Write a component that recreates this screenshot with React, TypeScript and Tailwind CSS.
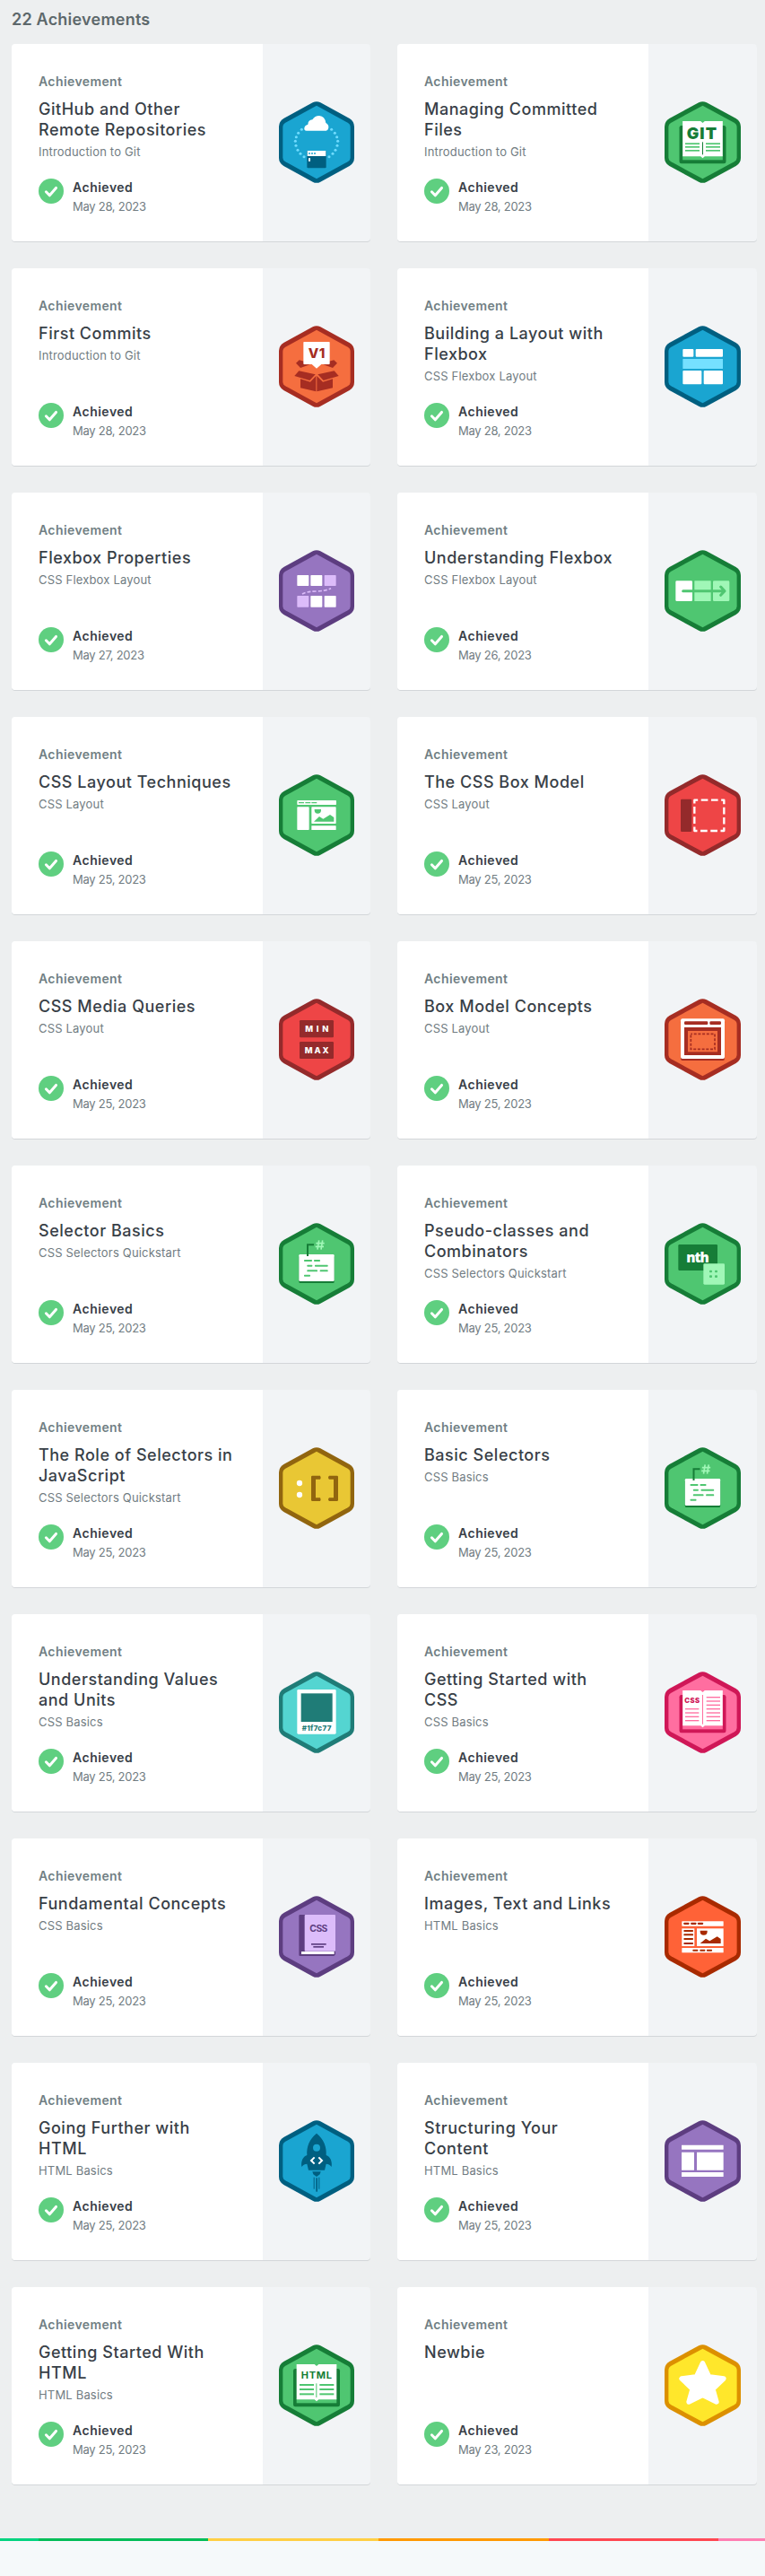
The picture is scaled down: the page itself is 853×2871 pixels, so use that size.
import type { ReactNode } from "react";

type Theme = { edge: string; fill: string };

const BLUE: Theme = { edge: "#005f80", fill: "#1aa5d1" };
const GREEN: Theme = { edge: "#167d37", fill: "#4fc671" };
const ORANGE: Theme = { edge: "#a62d22", fill: "#f56e3f" };
const PURPLE: Theme = { edge: "#5d3d80", fill: "#9675c0" };
const RED: Theme = { edge: "#942a2b", fill: "#ee4546" };
const YELLOW: Theme = { edge: "#91650f", fill: "#e9c734" };
const TEAL: Theme = { edge: "#1f7c77", fill: "#54d5d1" };
const PINK: Theme = { edge: "#cf1757", fill: "#ff6ea0" };
const FLAME: Theme = { edge: "#a82a00", fill: "#ff6237" };
const GOLD: Theme = { edge: "#dc9000", fill: "#ffe72b" };

function Badge({ theme, wide, children }: { theme: Theme; wide: boolean; children: ReactNode }) {
  const s = wide ? 255 / 252 : 1;
  return (
    <svg
      className={wide ? "h-[91px] w-[85px]" : "h-[91px] w-[84px]"}
      viewBox={wide ? "0 0 255 273" : "0 0 252 273"}
      fill="none"
    >
      <g transform={`scale(${s} 1)`}>
        <path
          fill={theme.edge}
          d="M113 4Q126 -3 139 4L236 57Q252 67 252 85V188Q252 206 236 216L139 269Q126 276 113 269L16 216Q0 206 0 188V85Q0 67 16 57Z"
        />
        <path
          fill={theme.fill}
          d="M126 14L230 71Q239 76 239 86V187Q239 197 230 202L126 259L22 202Q13 197 13 187V86Q13 76 22 71Z"
        />
      </g>
      {children}
    </svg>
  );
}

type BarProps = { x: number; y: number; w: number; h: number; c?: string; r?: number };
const Bar = ({ x, y, w, h, c = "#fff", r = 0 }: BarProps) => (
  <rect x={x} y={y} width={w} height={h} fill={c} rx={r} />
);

type LabelProps = { x: number; y: number; w: number; size: number; c: string; weight?: number; font?: string; children: string };
const Label = ({ x, y, w, size, c, weight = 800, font = "Inter", children }: LabelProps) => (
  <text
    x={x}
    y={y}
    fill={c}
    fontSize={size}
    fontWeight={weight}
    fontFamily={`${font}, sans-serif`}
    textLength={w}
    lengthAdjust="spacing"
  >
    {children}
  </text>
);

function Book({ theme, cx, top, children }: { theme: Theme; cx: number; top: number; children: ReactNode }) {
  return (
    <>
      <Bar x={cx - 78} y={top + 15} w={156} h={127} c={theme.edge} r={7} />
      <Bar x={cx - 67} y={top + 115} w={134} h={15} c={theme.fill} />
      <path
        fill="#fff"
        d={`M${cx - 67} ${top}H${cx - 7}L${cx} ${top + 6}L${cx + 7} ${top}H${cx + 67}V${top + 118}H${cx + 7}L${cx} ${top + 124}L${cx - 7} ${top + 118}H${cx - 67}Z`}
      />
      {children}
    </>
  );
}

const CloudArt = () => {
  const dots = [[76, 94], [65, 106], [58, 119], [55, 133], [57, 148], [63, 163], [72, 175], [84, 185]];
  return (
    <>
      {dots.map(([x, y]) => (
        <g key={y} fill="#70dcff">
          <circle cx={x} cy={y} r="4.6" />
          <circle cx={252 - x} cy={y} r="4.6" />
        </g>
      ))}
      <path fill="#fff" d="M92 98Q84 98 85 89Q86 80 97 77Q98 62 112 61Q120 48 135 48Q154 50 157 72Q167 77 166 88Q164 98 158 98Z" />
      <Bar x={94} y={165} w={64} h={58} c={BLUE.edge} r={3} />
      <Bar x={95} y={165} w={62} h={18} />
      {[102, 111, 120].map((x) => (
        <circle key={x} cx={x} cy={174} r="3" fill={BLUE.fill} />
      ))}
      <Bar x={99} y={189} w={6} h={12} r={2} />
    </>
  );
};

const GitArt = () => (
  <Book theme={GREEN} cx={127.5} top={66}>
    <Label x={74} y={125} w={100} size={54} c={GREEN.edge} weight={900}>GIT</Label>
    {[139, 150, 162].map((y) => (
      <g key={y}>
        <Bar x={69} y={y} w={48} h={5} c={GREEN.fill} />
        <Bar x={138} y={y} w={48} h={5} c={GREEN.fill} />
      </g>
    ))}
    <Bar x={126} y={136} w={3} h={42} c={GREEN.edge} />
  </Book>
);

const BoxArt = () => (
  <>
    <g fill={ORANGE.edge}>
      <path d="M57 125L68 115L84 119V130H104L72 141Z" />
      <path d="M195 125L184 115L168 119V130H148L180 141Z" />
      <path d="M67 151L122 163L103 183L52 168Z" />
      <path d="M185 151L130 163L149 183L200 168Z" />
      <path d="M72 178L105 188L124 168V220L72 208Z" />
      <path d="M180 178L147 188L127 168V220L180 208Z" />
    </g>
    <path fill="#fff" d="M84 54H168Q170 54 170 56V127Q170 129 168 129H142L126 143L110 129H84Q82 129 82 127V56Q82 54 84 54Z" />
    <Label x={98} y={107} w={56} size={45} c={ORANGE.edge}>V1</Label>
  </>
);

const FlexArt = () => (
  <>
    <Bar x={61} y={78} w={36} h={26} r={3} />
    <Bar x={104} y={78} w={91} h={26} r={3} />
    <Bar x={61} y={111} w={134} h={33} c="#75e0ff" r={1} />
    <Bar x={61} y={150} w={63} h={46} r={3} />
    <Bar x={131} y={150} w={64} h={46} r={3} />
  </>
);

const FlexPropsArt = () => (
  <>
    {[61, 106, 152].map((x, i) => (
      <g key={x}>
        <Bar x={x} y={84} w={39} h={36} c={i === 2 ? "#dcbcfa" : "#fff"} r={2} />
        <Bar x={x} y={153} w={39} h={38} c={i === 0 ? "#dcbcfa" : "#fff"} r={2} />
      </g>
    ))}
    <path d="M78 147Q95 138 124 138Q158 137 174 128" stroke="#dcbcfa" strokeWidth="5" strokeDasharray="12 6" />
  </>
);

const ArrowArt = () => (
  <>
    <Bar x={37} y={103} w={56} h={68} r={4} />
    <Bar x={100} y={103} w={55} h={68} c="#a0f7b7" r={1} />
    <Bar x={162} y={103} w={55} h={68} c="#a0f7b7" r={4} />
    <path d="M62 137H200M188 123L201 137L188 151" stroke={GREEN.fill} strokeWidth="9" strokeLinecap="round" strokeLinejoin="round" />
  </>
);

const TechniquesArt = () => (
  <>
    <Bar x={61} y={87} w={131} h={15} r={2} />
    {[66, 88, 109].map((x) => (
      <Bar key={x} x={x} y={93} w={18} h={4} c={GREEN.fill} r={1} />
    ))}
    <Bar x={61} y={109} w={40} h={77} r={2} />
    <Bar x={109} y={109} w={82} h={56} r={2} />
    <path fill={GREEN.fill} d="M119 117H141V120A11 11 0 0 1 119 120ZM117 158L135 141L148 149L171 135L184 144V158Z" />
    <Bar x={109} y={172} w={82} h={14} r={1} />
  </>
);

const BoxModelArt = () => (
  <>
    <Bar x={54} y={83} w={37} h={109} c={RED.edge} r={4} />
    <path d="M100 86H199V189H100Z" stroke="#fff" strokeWidth="7" strokeLinejoin="round" strokeDasharray="23 10.67" strokeDashoffset="11.5" />
  </>
);

const MinMaxArt = () => (
  <>
    <Bar x={69} y={72} w={114} h={58} c={RED.edge} r={4} />
    <Bar x={69} y={144} w={114} h={57} c={RED.edge} r={4} />
    <Label x={88} y={112} w={78} size={28} c="#fff">MIN</Label>
    <Label x={86} y={183} w={81} size={28} c="#fff">MAX</Label>
  </>
);

const ConceptsArt = () => (
  <>
    <Bar x={54} y={73} w={147} h={134} c={ORANGE.edge} r={6} />
    <Bar x={54} y={67} w={147} h={134} r={6} />
    <Bar x={66} y={76} w={79} h={11} c={ORANGE.edge} r={4} />
    <Bar x={151} y={76} w={38} h={11} c={ORANGE.edge} r={4} />
    <Bar x={66} y={96} w={123} h={93} c={ORANGE.edge} />
    <Bar x={78} y={108} w={99} h={70} c={ORANGE.fill} />
    <path d="M88 118H168V169H88Z" stroke={ORANGE.edge} strokeWidth="5" strokeDasharray="9 5.1" strokeDashoffset="4" />
  </>
);

const HashArt = () => (
  <>
    <Bar x={67} y={111} w={118} h={90} c={GREEN.edge} r={4} />
    <Bar x={67} y={105} w={118} h={90} r={4} />
    <path d="M96 111V73H117" stroke={GREEN.edge} strokeWidth="6" />
    <path d="M134 58L129 89M146 58L141 89M124 68H152M122 79H150" stroke="#a0f7b7" strokeWidth="5" />
    {[[84, 123, 27], [117, 123, 21], [94, 140, 18], [120, 140, 44], [94, 157, 35], [137, 157, 27], [84, 173, 21]].map(([x, y, w]) => (
      <Bar key={`${x}-${y}`} x={x} y={y} w={w} h={6} c={GREEN.fill} r={2} />
    ))}
  </>
);

const NthArt = () => (
  <>
    <Bar x={46} y={72} w={131} h={87} c={GREEN.edge} r={4} />
    <Label x={73} y={131} w={76} size={46} c="#fff" font="'Open Sans'">nth</Label>
    <Bar x={130} y={136} w={71} h={70} c="#a0f7b7" r={4} />
    {[150, 168].map((x) => (
      <g key={x}>
        <Bar x={x} y={158} w={9} h={8} c={GREEN.fill} r={3} />
        <Bar x={x} y={175} w={9} h={8} c={GREEN.fill} r={3} />
      </g>
    ))}
  </>
);

const BracketsArt = () => (
  <>
    <circle cx="69" cy="120" r="9.5" fill="#fff" />
    <circle cx="69" cy="159" r="9.5" fill="#fff" />
    <path
      fill={YELLOW.edge}
      d="M112 95H138Q142 101 138 107H123V169H138Q142 175 138 180H112Q108 180 108 176V99Q108 95 112 95ZM194 95H168Q162 101 168 107H183V169H168Q162 175 168 180H194Q198 180 198 176V99Q198 95 194 95Z"
    />
  </>
);

const SwatchArt = () => (
  <>
    <Bar x={61} y={60} w={130} h={149} r={4} />
    <Bar x={74} y={73} w={105} h={95} c={TEAL.edge} />
    <Label x={77} y={198} w={98} size={24} c={TEAL.edge}>#1f7c77</Label>
  </>
);

const CssPagesArt = () => (
  <Book theme={PINK} cx={127.5} top={63}>
    <Label x={67} y={105} w={50} size={23} c={PINK.edge} weight={900}>CSS</Label>
    {[84, 97, 110, 123, 136, 149, 162].map((y) => (
      <g key={y}>
        {y > 115 && <Bar x={69} y={y} w={46} h={4} c={PINK.fill} />}
        <Bar x={140} y={y} w={46} h={4} c={PINK.fill} />
      </g>
    ))}
    <Bar x={126} y={78} w={3} h={98} c={PINK.fill} />
  </Book>
);

const CssBookArt = () => (
  <>
    <path fill={PURPLE.edge} d="M71 63H105V182H189V196L184 201H71Q67 201 67 197V67Q67 63 71 63Z" />
    <Bar x={86} y={63} w={103} h={122} c="#dcbcfa" r={3} />
    <Bar x={75} y={186} w={110} h={9} r={1} />
    <Label x={103} y={121} w={60} size={31} c={PURPLE.edge} weight={700}>CSS</Label>
    <Bar x={108} y={159} w={50} h={5} c={PURPLE.edge} />
    <Bar x={115} y={168} w={35} h={5} c={PURPLE.edge} />
  </>
);

const ImagesArt = () => (
  <>
    <Bar x={58} y={85} w={139} h={16} r={1} />
    <Bar x={58} y={109} w={42} h={59} />
    <Bar x={108} y={109} w={89} h={59} />
    <Bar x={58} y={174} w={139} h={16} r={1} />
    {[64, 88, 111].map((x) => (
      <g key={x}>
        <Bar x={x} y={89} w={18} h={7} c={FLAME.edge} r={2} />
        <Bar x={x + 30} y={179} w={18} h={6} c={FLAME.edge} r={2} />
      </g>
    ))}
    {[114, 127, 141, 156].map((y) => (
      <Bar key={y} x={64} y={y} w={32} h={6} c={FLAME.edge} r={2} />
    ))}
    <path fill={FLAME.edge} d="M119 116H143V119A12 12 0 0 1 119 119ZM119 159L138 143L151 151L176 136L188 144V159Z" />
  </>
);

const RocketArt = () => (
  <>
    <g fill={BLUE.edge}>
      <path d="M126 44C150 64 160 88 158 117C172 121 179 139 176 156C170 149 165 146 158 146L153 167H99L94 146C87 146 82 149 76 156C73 139 80 121 94 117C92 88 102 64 126 44Z" />
      <path d="M112 172H140L137 181L126 189L115 181Z" />
      <Bar x={116} y={191} w={3} h={39} c={BLUE.edge} />
      <Bar x={124} y={193} w={5} h={46} c={BLUE.edge} />
      <Bar x={133} y={191} w={3} h={39} c={BLUE.edge} />
    </g>
    <circle cx="126" cy="92" r="12" fill={BLUE.fill} />
    <path d="M119 124L108 135L119 146M133 124L144 135L133 146" stroke="#fff" strokeWidth="6" />
  </>
);

const StructureArt = () => (
  <>
    <Bar x={57} y={83} w={140} h={15} r={1} />
    <Bar x={57} y={107} w={42} h={60} r={1} />
    <Bar x={108} y={107} w={89} h={60} r={1} />
    <Bar x={57} y={174} w={140} h={15} r={1} />
  </>
);

const HtmlArt = () => (
  <Book theme={GREEN} cx={126} top={66}>
    <Label x={74} y={114} w={103} size={33} c={GREEN.edge} weight={700}>HTML</Label>
    {[132, 147, 163].map((y) => (
      <g key={y}>
        <Bar x={69} y={y} w={48} h={6} c={GREEN.fill} />
        <Bar x={136} y={y} w={48} h={6} c={GREEN.fill} />
      </g>
    ))}
    <Bar x={124} y={130} w={3} h={47} c={GREEN.fill} />
  </Book>
);

const StarArt = () => (
  <path
    d="M127.5 62L147 104Q148 107 152 108L198 114L165 146Q162 149 163 153L174 192L133 172Q127.500 169 122 172L81 192L92 153Q93 149 90 146L57 114L103 108Q107 107 108 104Z"
    fill="#fff"
    stroke="#fff"
    strokeWidth="16"
    strokeLinejoin="round"
  />
);

type Item = { title: string[]; course?: string; date: string; theme: Theme; art: ReactNode };

const items: Item[] = [
  { title: ["GitHub and Other", "Remote Repositories"], course: "Introduction to Git", date: "May 28, 2023", theme: BLUE, art: <CloudArt /> },
  { title: ["Managing Committed", "Files"], course: "Introduction to Git", date: "May 28, 2023", theme: GREEN, art: <GitArt /> },
  { title: ["First Commits"], course: "Introduction to Git", date: "May 28, 2023", theme: ORANGE, art: <BoxArt /> },
  { title: ["Building a Layout with", "Flexbox"], course: "CSS Flexbox Layout", date: "May 28, 2023", theme: BLUE, art: <FlexArt /> },
  { title: ["Flexbox Properties"], course: "CSS Flexbox Layout", date: "May 27, 2023", theme: PURPLE, art: <FlexPropsArt /> },
  { title: ["Understanding Flexbox"], course: "CSS Flexbox Layout", date: "May 26, 2023", theme: GREEN, art: <ArrowArt /> },
  { title: ["CSS Layout Techniques"], course: "CSS Layout", date: "May 25, 2023", theme: GREEN, art: <TechniquesArt /> },
  { title: ["The CSS Box Model"], course: "CSS Layout", date: "May 25, 2023", theme: RED, art: <BoxModelArt /> },
  { title: ["CSS Media Queries"], course: "CSS Layout", date: "May 25, 2023", theme: RED, art: <MinMaxArt /> },
  { title: ["Box Model Concepts"], course: "CSS Layout", date: "May 25, 2023", theme: ORANGE, art: <ConceptsArt /> },
  { title: ["Selector Basics"], course: "CSS Selectors Quickstart", date: "May 25, 2023", theme: GREEN, art: <HashArt /> },
  { title: ["Pseudo-classes and", "Combinators"], course: "CSS Selectors Quickstart", date: "May 25, 2023", theme: GREEN, art: <NthArt /> },
  { title: ["The Role of Selectors in", "JavaScript"], course: "CSS Selectors Quickstart", date: "May 25, 2023", theme: YELLOW, art: <BracketsArt /> },
  { title: ["Basic Selectors"], course: "CSS Basics", date: "May 25, 2023", theme: GREEN, art: <g transform="translate(1.500 0)"><HashArt /></g> },
  { title: ["Understanding Values", "and Units"], course: "CSS Basics", date: "May 25, 2023", theme: TEAL, art: <SwatchArt /> },
  { title: ["Getting Started with", "CSS"], course: "CSS Basics", date: "May 25, 2023", theme: PINK, art: <CssPagesArt /> },
  { title: ["Fundamental Concepts"], course: "CSS Basics", date: "May 25, 2023", theme: PURPLE, art: <CssBookArt /> },
  { title: ["Images, Text and Links"], course: "HTML Basics", date: "May 25, 2023", theme: FLAME, art: <ImagesArt /> },
  { title: ["Going Further with", "HTML"], course: "HTML Basics", date: "May 25, 2023", theme: BLUE, art: <RocketArt /> },
  { title: ["Structuring Your", "Content"], course: "HTML Basics", date: "May 25, 2023", theme: PURPLE, art: <StructureArt /> },
  { title: ["Getting Started With", "HTML"], course: "HTML Basics", date: "May 25, 2023", theme: GREEN, art: <HtmlArt /> },
  { title: ["Newbie"], date: "May 23, 2023", theme: GOLD, art: <StarArt /> },
];

function Card({ item, wide }: { item: Item; wide: boolean }) {
  return (
    <article className="flex h-[220px] overflow-hidden rounded-[4px] bg-[#f2f4f6] shadow-[0_1px_0_#d3d6d9]">
      <div className="flex w-[280px] shrink-0 flex-col bg-white pt-[30px] pr-2 pb-[29px] pl-[30px]">
        <p className="text-[14px] leading-6 font-semibold tracking-[0.4px] text-[#717f84]">Achievement</p>
        <h2 className="mt-[7px] text-[18px] leading-[23px] font-medium tracking-[0.52px] whitespace-nowrap text-[#384047]">
          {item.title.map((line) => (
            <span key={line} className="block">{line}</span>
          ))}
        </h2>
        {item.course && (
          <p className="mt-[3px] text-[13px] leading-5 tracking-[0.18px] text-[#717c82]">{item.course}</p>
        )}
        <div className="mt-auto flex gap-[10px]">
          <svg className="size-7 shrink-0" viewBox="0 0 28 28" fill="none">
            <circle cx="14" cy="14" r="14" fill="#5fcf80" />
            <path d="M8.400 14.800L12.300 18.800L19.500 10.400" stroke="#fff" strokeWidth="3" strokeLinecap="round" strokeLinejoin="round" />
          </svg>
          <div>
            <p className="text-[14px] leading-5 font-semibold tracking-[0.5px] text-[#384047]">Achieved</p>
            <p className="mt-px text-[13px] leading-5 tracking-[-0.27px] text-[#717c82]">{item.date}</p>
          </div>
        </div>
      </div>
      <div className="flex flex-1 justify-center pt-16">
        <Badge theme={item.theme} wide={wide}>{item.art}</Badge>
      </div>
    </article>
  );
}

export default function App() {
  return (
    <div className="flex min-h-[2871px] flex-col bg-[#f5f9fa] font-['Inter',sans-serif] antialiased">
      <main className="bg-[#edeff0] pr-[9px] pb-[60px] pl-[13px]">
        <h1 className="h-[49px] pt-[10px] text-[18px] leading-[23px] font-semibold tracking-[0.22px] text-[#5d686b]">22 Achievements</h1>
        <div className="grid grid-cols-[400px_401px] gap-[30px]">
          {items.map((item, i) => (
            <Card key={item.title.join(" ")} item={item} wide={i % 2 === 1} />
          ))}
        </div>
      </main>
      <div className="flex h-[3px] overflow-hidden">
        <div className="w-[42.500px] bg-[#00d37f]" />
        <div className="w-[189.500px] bg-[#00bd57]" />
        <div className="w-[190px] bg-[#ffcf44]" />
        <div className="w-[190px] bg-[#ff9900]" />
        <div className="w-[189px] bg-[#ff4750]" />
        <div className="flex-1 bg-[#ff7fb2]" />
      </div>
    </div>
  );
}
